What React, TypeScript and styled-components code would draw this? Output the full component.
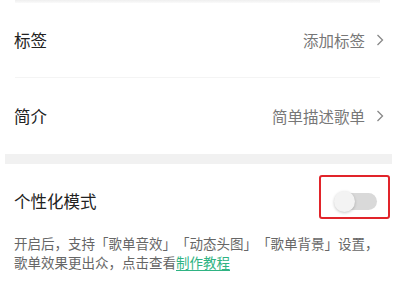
import React from "react";
import styled, { createGlobalStyle } from "styled-components";

const GlobalStyle = createGlobalStyle`
    html, body {
        margin: 0;
        padding: 0;
        background: #ffffff;
    }
    body {
        font-family: "Noto Sans CJK SC", "Noto Sans", sans-serif;
        -webkit-font-smoothing: antialiased;
    }
`;

const Page = styled.div`
    width: 395px;
    height: 287px;
    overflow: hidden;
    background: #ffffff;
    display: flex;
    flex-direction: column;
`;

const TopEdge = styled.div`
    height: 3px;
    margin: 0 15px;
    background: linear-gradient(#efefef, #fafafa);
`;

const Row = styled.div<{ $height: number }>`
    height: ${(p) => p.$height}px;
    display: flex;
    align-items: center;
    justify-content: space-between;
    padding: 0 11px 0 14px;
    box-sizing: border-box;
`;

const Label = styled.span`
    font-size: 16.5px;
    color: #222222;
`;

const Value = styled.span`
    display: flex;
    align-items: center;
    gap: 11px;
    font-size: 15.5px;
    color: #777777;
`;

const Divider = styled.div`
    height: 1px;
    margin: 0 15px;
    background: #f4f4f4;
`;

const SectionGap = styled.div`
    height: 10px;
    margin: 0 3px 0 5px;
    background: #f1f1f1;
`;

const ToggleRow = styled(Row)`
    padding: 4px 18px 0 14px;
`;

const SwitchWrap = styled.div`
    position: relative;
    width: 43px;
    height: 21px;
`;

const Track = styled.div<{ $on: boolean }>`
    position: absolute;
    left: 6px;
    right: 0;
    top: 2px;
    height: 17px;
    border-radius: 9px;
    background: ${(p) => (p.$on ? "#2fb383" : "#d9d9d9")};
`;

const Knob = styled.div`
    position: absolute;
    left: 0;
    top: 0;
    width: 21px;
    height: 21px;
    border-radius: 50%;
    background: #f3f3f3;
    box-shadow: 0 1px 3px rgba(0, 0, 0, 0.22);
`;

const Highlight = styled.div`
    position: absolute;
    left: -15px;
    right: -13px;
    top: -16px;
    bottom: -7px;
    border: 2px solid #e1242a;
    border-radius: 3px;
`;

const Description = styled.p`
    margin: 0;
    padding: 0 14px;
    font-size: 13.5px;
    line-height: 19px;
    color: #666666;
    white-space: nowrap;
    text-spacing-trim: space-all;
    font-feature-settings: "palt" 0, "halt" 0;
`;

const Link = styled.a`
    color: #2fb383;
    text-decoration: underline;
    text-underline-offset: 2px;
`;

const Chevron: React.FC = () => (
    <svg width="8" height="12" viewBox="0 0 8 12">
        <path d="M1.5 1 L6.5 6 L1.5 11" fill="none" stroke="#888888" strokeWidth="1.3" />
    </svg>
);

const Switch: React.FC<{ on: boolean }> = ({ on }) => (
    <SwitchWrap>
        <Track $on={on} />
        <Knob />
        <Highlight />
    </SwitchWrap>
);

export default function App() {
    return (
        <Page>
            <GlobalStyle />
            <TopEdge />
            <Row $height={74}>
                <Label>标签</Label>
                <Value>
                    添加标签
                    <Chevron />
                </Value>
            </Row>
            <Divider />
            <Row $height={76}>
                <Label>简介</Label>
                <Value>
                    简单描述歌单
                    <Chevron />
                </Value>
            </Row>
            <SectionGap />
            <ToggleRow $height={70}>
                <Label>个性化模式</Label>
                <Switch on={false} />
            </ToggleRow>
            <Description>
                开启后，支持「歌单音效」「动态头图」「歌单背景」设置，
                <br />
                歌单效果更出众，点击查看<Link>制作教程</Link>
            </Description>
        </Page>
    );
}
